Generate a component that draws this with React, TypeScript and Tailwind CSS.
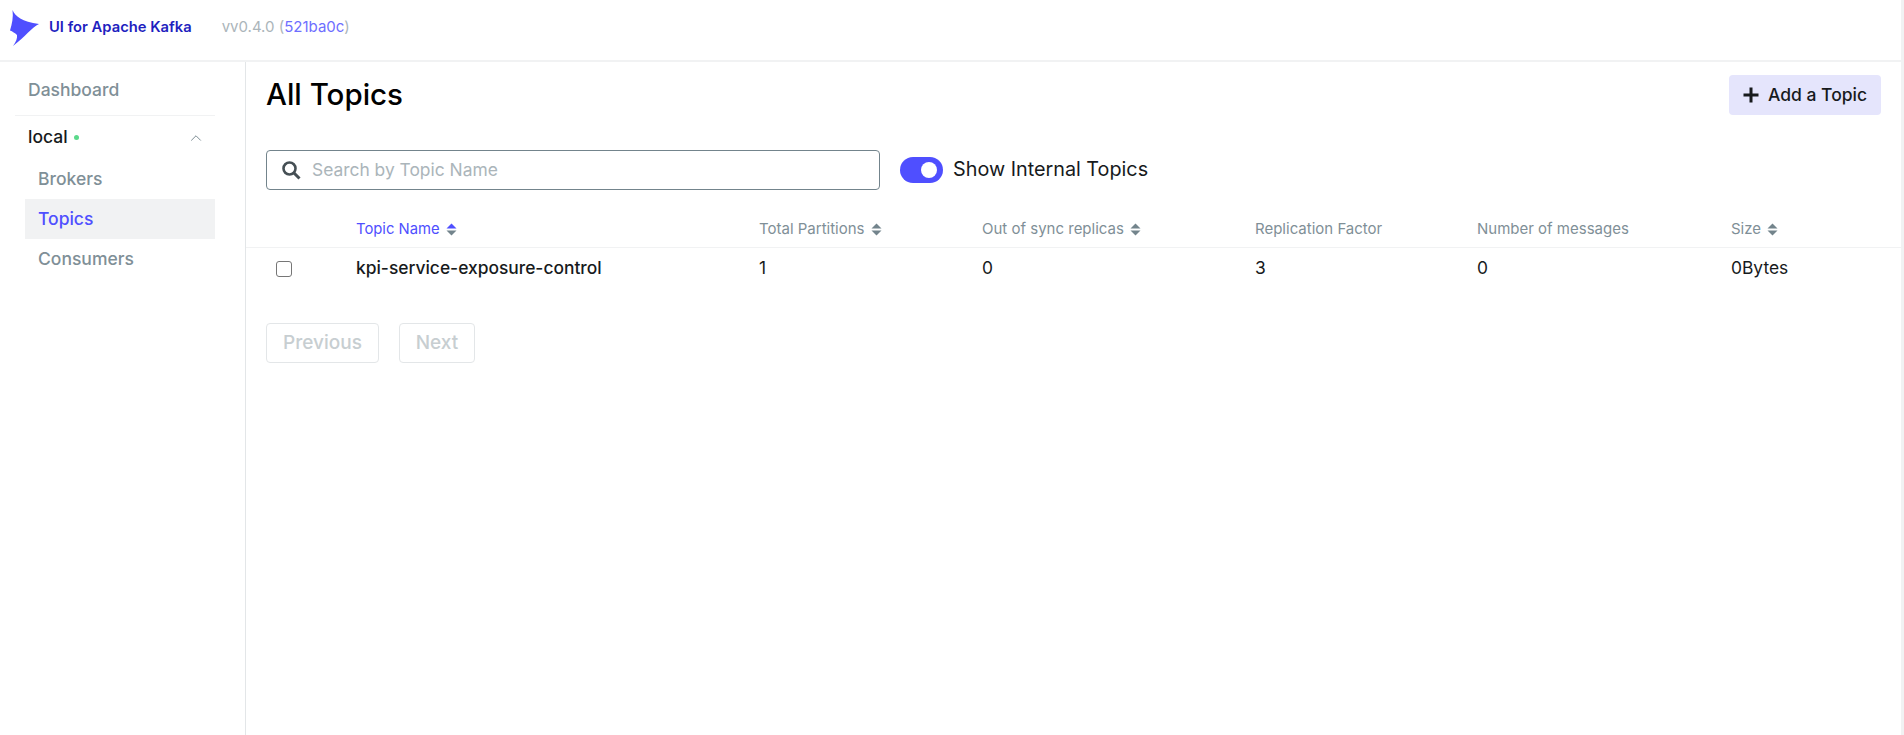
import { ChevronUp } from 'lucide-react';

function SortIcon({ active }: { active?: boolean }) {
  return (
    <svg width="11" height="13" viewBox="0 0 11 13" className="ml-[6px] shrink-0">
      <path d="M5.5 0.5 L10.5 5.5 H0.5 Z" fill={active ? '#4F4FFF' : '#73848C'} />
      <path d="M5.5 12.5 L10.5 7.5 H0.5 Z" fill="#73848C" />
    </svg>
  );
}

function Logo() {
  return (
    <svg width="30" height="36" viewBox="0 0 30 36" className="shrink-0">
      <path d="M2.5 0 C5 6 12 12 29 14 C22 17 15 27 3 36 C6 32 7.5 28 7 25 C5 23 2.5 21.5 0 20.5 C2 14 3.5 7 2.5 0 Z" fill="#4F4FFF" />
    </svg>
  );
}

const columns = [
  { name: 'Topic Name', sort: true, active: true },
  { name: 'Total Partitions', sort: true },
  { name: 'Out of sync replicas', sort: true },
  { name: 'Replication Factor' },
  { name: 'Number of messages' },
  { name: 'Size', sort: true },
];

const row = ['1', '0', '3', '0', '0Bytes'];

const font = { fontFamily: 'Inter, sans-serif' };

export default function App() {
  return (
    <div className="h-[735px] bg-white flex overflow-hidden text-[#171A1C]" style={font}>
      <div className="flex-1 min-w-0 flex flex-col">
        <header className="h-[62px] border-b-2 border-[#F1F2F3] flex items-center pl-[10px] pb-[5px] shrink-0">
          <Logo />
          <span className="ml-[9px] text-[14.75px] font-semibold text-[#1F1FBF] whitespace-nowrap">UI for Apache Kafka</span>
          <span className="ml-[30px] text-[15px] text-[#ABB5BA] whitespace-nowrap">
            vv0.4.0 (<span className="text-[#6E6EFF]">521ba0c</span>)
          </span>
        </header>

        <div className="flex flex-1 min-h-0">
          <aside className="w-[246px] shrink-0 border-r border-[#E3E6E8] pl-[15px] pr-[30px]">
            <div className="h-[54px] pt-[3px] border-b border-[#F1F2F3] flex items-center pl-[13px] text-[17.5px] font-medium text-[#7F8F97]">
              Dashboard
            </div>
            <div className="h-[43px] flex items-center pl-[13px] pr-[10px] text-[17.5px] font-medium">
              <span>local</span>
              <span className="ml-[6px] w-[5px] h-[5px] rounded-full bg-[#5BD98B]" />
              <ChevronUp size={18} strokeWidth={1.25} className="ml-auto text-[#73848C]" />
            </div>
            <div className="pl-[10px]">
              <div className="h-[40px] flex items-center pl-[13px] text-[17.5px] font-medium text-[#7F8F97]">Brokers</div>
              <div className="h-[40px] flex items-center pl-[13px] text-[17.5px] font-medium bg-[#F1F2F3] text-[#4F4FFF]">Topics</div>
              <div className="h-[40px] flex items-center pl-[13px] text-[17.5px] font-medium text-[#7F8F97]">Consumers</div>
            </div>
          </aside>

          <main className="flex-1 min-w-0">
            <div className="h-[66px] flex items-center justify-between pl-[20px] pr-[20px]">
              <h1 className="text-[29.5px] font-medium text-[#000] mb-[1px]">All Topics</h1>
              <button className="h-[40px] w-[152px] rounded bg-[#E5E5FC] flex items-center justify-center gap-[9px] text-[17.5px] font-medium text-[#171A1C]">
                <svg width="16" height="16" viewBox="0 0 16 16">
                  <path d="M8 0.5 V15.5 M0.5 8 H15.5" stroke="#171A1C" strokeWidth="3" />
                </svg>
                Add a Topic
              </button>
            </div>

            <div className="mt-[22px] h-[40px] pl-[20px] flex items-center">
              <div className="w-[614px] h-[40px] border border-[#73848C] rounded flex items-center pl-[14px]">
                <svg width="20" height="20" viewBox="0 0 20 20" className="shrink-0">
                  <circle cx="8.5" cy="8.5" r="6" fill="none" stroke="#454F54" strokeWidth="2.6" />
                  <path d="M13 13 L18.5 18.5" stroke="#454F54" strokeWidth="3" />
                </svg>
                <input placeholder="Search by Topic Name" className="ml-[11px] flex-1 text-[17.4px] outline-none placeholder:text-[#ABB5BA]" />
              </div>
              <div className="ml-[20px] w-[43px] h-[26px] rounded-full bg-[#4F4FFF] flex items-center justify-end pr-[6px]">
                <span className="w-[16px] h-[16px] rounded-full bg-white" />
              </div>
              <span className="ml-[10px] text-[19.8px] text-[#171A1C]">Show Internal Topics</span>
            </div>

            <div className="mt-[22px] grid grid-cols-[110px_403px_223px_273px_222px_254px_1fr] h-[36px] items-center border-b border-[#F1F2F3] text-[15px] text-[#7F8F97] whitespace-nowrap">
              <div />
              {columns.map((col) => (
                <div key={col.name} className={`flex items-center ${col.active ? 'text-[#4F4FFF] text-[14.8px]' : ''}`}>
                  {col.name}
                  {col.sort && <SortIcon active={col.active} />}
                </div>
              ))}
            </div>

            <div className="grid grid-cols-[110px_403px_223px_273px_222px_254px_1fr] h-[41px] items-center text-[17.4px] text-[#171A1C] whitespace-nowrap">
              <div className="pl-[30px] flex items-center">
                <input type="checkbox" className="w-[16px] h-[16px] appearance-none border border-[#767676] rounded-[3px] bg-white" />
              </div>
              <div className="font-medium">kpi-service-exposure-control</div>
              {row.map((v, i) => (
                <div key={i}>{v}</div>
              ))}
            </div>

            <div className="mt-[34px] pl-[20px] flex gap-[20px]">
              <button className="h-[40px] w-[113px] border border-[#E3E6E8] rounded text-[19px] font-medium text-[#C7CED1]">Previous</button>
              <button className="h-[40px] w-[76px] border border-[#E3E6E8] rounded text-[19px] font-medium text-[#C7CED1]">Next</button>
            </div>
          </main>
        </div>
      </div>
      <div className="w-[3px] shrink-0 bg-[#F1F2F3]" />
    </div>
  );
}
